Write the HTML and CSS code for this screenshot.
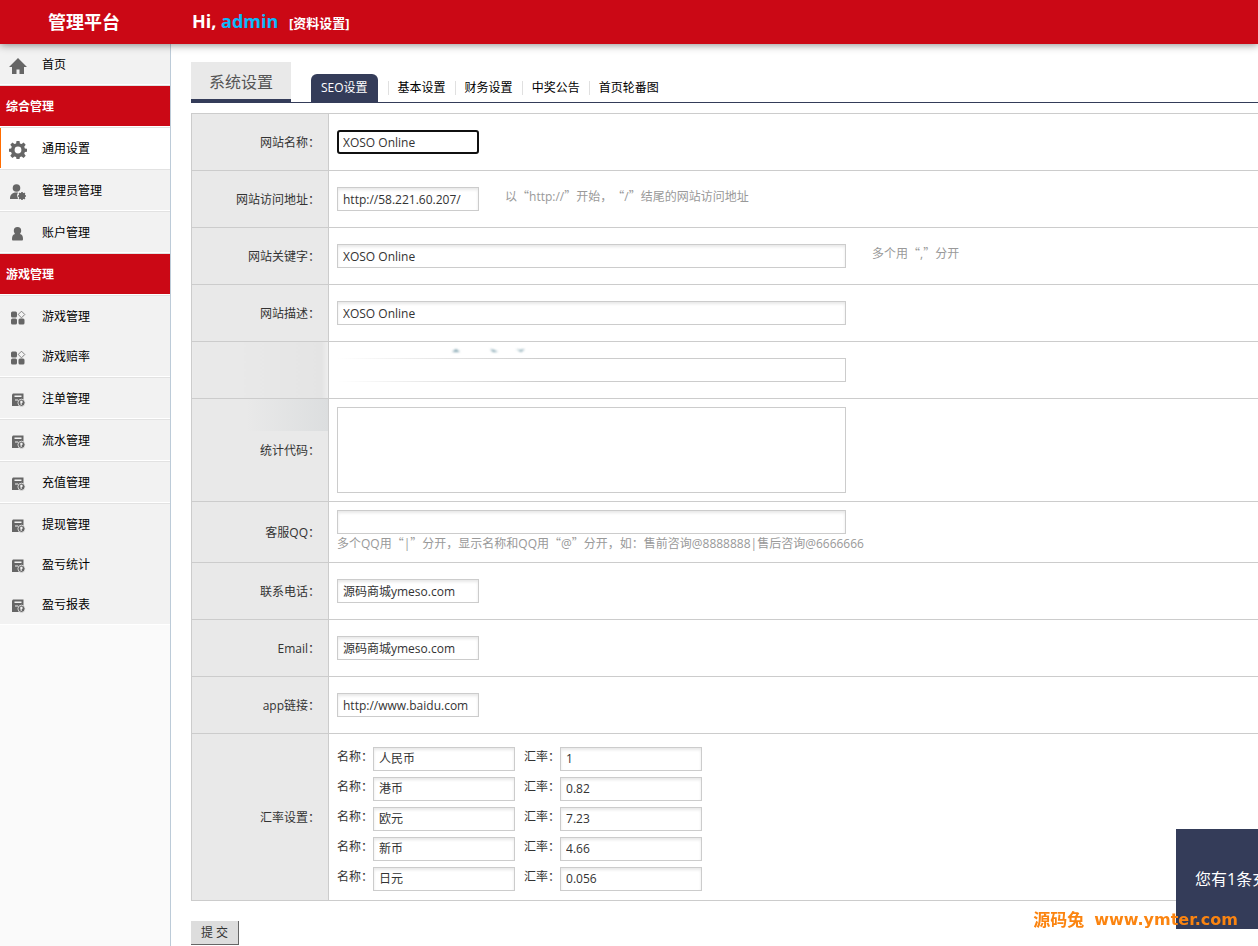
FILE: index.html
```html
<!DOCTYPE html>
<html lang="zh-CN">
<head>
<meta charset="utf-8">
<title>管理平台</title>
<link rel="stylesheet" href="styles.css">
</head>
<body>
<svg class="sprite" aria-hidden="true">
  <symbol id="i-home" viewBox="0 0 18 18"><path d="M9 1 0 10h3v7h4.500v-4.500h3V17H15v-7h3z"/></symbol>
  <symbol id="i-gear" viewBox="0 0 18 18"><path fill-rule="evenodd" d="M7.500 0h3l.4 2.400 1.700.7 2-1.500 2.100 2.100-1.500 2 .7 1.700 2.100.3v3l-2.100.4-.7 1.700 1.500 2-2.100 2.100-2-1.500-1.700.7-.4 2H7.500l-.4-2-1.700-.7-2 1.500-2.100-2.100 1.500-2-.7-1.700L0 10.700v-3l2.100-.3.7-1.700-1.500-2 2.100-2.100 2 1.500 1.700-.7zM9 5.600a3.400 3.400 0 1 0 0 6.800 3.400 3.400 0 0 0 0-6.800z"/></symbol>
  <symbol id="i-admin" viewBox="0 0 18 18"><circle cx="7.500" cy="5" r="3.800"/><path d="M1 16c0-4 2-6 5-6.500h3L8 12l1 4z"/><circle cx="13" cy="13" r="3.200"/><path d="M12.200 9h1.600v8h-1.600zM9 12.200h8v1.600H9zM9.600 10.700l1.100-1.100 5.700 5.700-1.100 1.100zM15.300 9.600l1.100 1.100-5.700 5.700-1.100-1.100z"/></symbol>
  <symbol id="i-user" viewBox="0 0 18 18"><path d="M8.500 2a3.700 3.700 0 0 1 3.700 3.700c0 1.500-.7 2.400-1.200 3.300 2 .4 3 2 3 5 0 1-.4 1.500-1.200 1.500H4.200C3.400 15.500 3 15 3 14c0-3 1-4.600 3-5-.5-.9-1.200-1.800-1.200-3.300A3.700 3.700 0 0 1 8.500 2z"/></symbol>
  <symbol id="i-apps" viewBox="0 0 18 18"><rect x="2" y="2.500" width="6" height="6" rx="1.500"/><rect x="2" y="9.500" width="6" height="6" rx="1.500"/><rect x="9.500" y="9.500" width="6" height="6" rx="1.500"/><path fill="none" stroke="#666" stroke-width=".8" d="m12.500 2.200 3.300 3.300-3.300 3.300-3.300-3.300z"/></symbol>
  <symbol id="i-doc" viewBox="0 0 18 18"><path d="M4 2.500h10.500V11L12 15H3V3.500z"/><path fill="#f2f2f2" d="M5.500 4.500h7V6h-7zM6 8.500h3v1H6z"/><circle cx="12.500" cy="11.800" r="3.600" stroke="#f2f2f2" stroke-width=".8"/><path fill="#f2f2f2" d="M11.300 9.800h2.200v2.200h-.8v2h-1v-1.500h-.4z"/></symbol>
</svg>

<header class="topbar">
  <h1 class="brand">管理平台</h1>
  <p class="greeting">Hi, <span class="greeting-name">admin</span> <a class="greeting-link" href="#">[资料设置]</a></p>
</header>

<div class="layout">
  <nav class="sidebar" aria-label="主菜单">
    <div class="group"><a class="item" href="#"><svg class="icon"><use href="#i-home"/></svg>首页</a></div>
    <h2 class="section">综合管理</h2>
    <div class="group"><a class="item item-active" href="#"><svg class="icon"><use href="#i-gear"/></svg>通用设置</a></div>
    <div class="group"><a class="item" href="#"><svg class="icon"><use href="#i-admin"/></svg>管理员管理</a></div>
    <div class="group"><a class="item" href="#"><svg class="icon"><use href="#i-user"/></svg>账户管理</a></div>
    <h2 class="section">游戏管理</h2>
    <div class="group">
      <a class="item" href="#"><svg class="icon"><use href="#i-apps"/></svg>游戏管理</a>
      <a class="item" href="#"><svg class="icon"><use href="#i-apps"/></svg>游戏赔率</a>
    </div>
    <div class="group"><a class="item" href="#"><svg class="icon"><use href="#i-doc"/></svg>注单管理</a></div>
    <div class="group"><a class="item" href="#"><svg class="icon"><use href="#i-doc"/></svg>流水管理</a></div>
    <div class="group"><a class="item" href="#"><svg class="icon"><use href="#i-doc"/></svg>充值管理</a></div>
    <div class="group">
      <a class="item" href="#"><svg class="icon"><use href="#i-doc"/></svg>提现管理</a>
      <a class="item" href="#"><svg class="icon"><use href="#i-doc"/></svg>盈亏统计</a>
      <a class="item" href="#"><svg class="icon"><use href="#i-doc"/></svg>盈亏报表</a>
    </div>
  </nav>

  <main class="main">
    <div class="tabbar">
      <h2 class="page-title">系统设置</h2>
      <nav class="tabs" aria-label="设置分类">
        <a class="tab tab-active" href="#">SEO设置</a>
        <a class="tab" href="#">基本设置</a>
        <a class="tab" href="#">财务设置</a>
        <a class="tab" href="#">中奖公告</a>
        <a class="tab" href="#">首页轮番图</a>
      </nav>
    </div>

    <form>
      <table class="settings">
        <tr>
          <th scope="row"><label for="name">网站名称：</label></th>
          <td><div class="field"><input class="text text-current" id="name" type="text" value="XOSO Online"></div></td>
        </tr>
        <tr>
          <th scope="row"><label for="url">网站访问地址：</label></th>
          <td><div class="field"><input class="text" id="url" type="text" value="http://58.221.60.207/"><span class="hint hint-side">以<span class="cjk">“</span>http://<span class="cjk">”</span>开始，<span class="cjk">“</span>/<span class="cjk">”</span>结尾的网站访问地址</span></div></td>
        </tr>
        <tr>
          <th scope="row"><label for="keys">网站关键字：</label></th>
          <td><div class="field"><input class="text text-wide" id="keys" type="text" value="XOSO Online"><span class="hint hint-side">多个用<span class="cjk">“</span>,<span class="cjk">”</span>分开</span></div></td>
        </tr>
        <tr>
          <th scope="row"><label for="desc">网站描述：</label></th>
          <td><div class="field"><input class="text text-wide" id="desc" type="text" value="XOSO Online"></div></td>
        </tr>
        <tr>
          <th scope="row" class="smudge-top"></th>
          <td class="marked"><div class="field"><input class="text text-wide text-faded" type="text" aria-label="其他"></div>
            <svg class="specks" viewBox="0 0 74 8" aria-hidden="true"><path fill="#7da0ac" d="m0 5 4-3 4 3zM38 2l4 1 4 2h-5zM64 2l4 1 5-1-4 3z"/></svg></td>
        </tr>
        <tr>
          <th scope="row" class="smudge-bottom"><label for="stats">统计代码：</label></th>
          <td class="tight"><textarea class="area" id="stats"></textarea></td>
        </tr>
        <tr>
          <th scope="row"><label for="qq">客服QQ：</label></th>
          <td class="tight"><div class="field"><input class="text text-wide" id="qq" type="text"></div>
            <div class="hint">多个QQ用<span class="cjk">“</span>|<span class="cjk">”</span>分开，显示名称和QQ用<span class="cjk">“</span>@<span class="cjk">”</span>分开，如：售前咨询@8888888|售后咨询@6666666</div></td>
        </tr>
        <tr>
          <th scope="row"><label for="tel">联系电话：</label></th>
          <td><div class="field"><input class="text" id="tel" type="text" value="源码商城ymeso.com"></div></td>
        </tr>
        <tr>
          <th scope="row"><label for="email">Email：</label></th>
          <td><div class="field"><input class="text" id="email" type="text" value="源码商城ymeso.com"></div></td>
        </tr>
        <tr>
          <th scope="row"><label for="app">app链接：</label></th>
          <td><div class="field"><input class="text" id="app" type="text" value="http://www.baidu.com"></div></td>
        </tr>
        <tr>
          <th scope="row">汇率设置：</th>
          <td class="tight">
            <div class="rate"><label for="n1">名称：</label><input class="text" id="n1" type="text" value="人民币"><label for="r1">汇率：</label><input class="text" id="r1" type="text" value="1"></div>
            <div class="rate"><label for="n2">名称：</label><input class="text" id="n2" type="text" value="港币"><label for="r2">汇率：</label><input class="text" id="r2" type="text" value="0.82"></div>
            <div class="rate"><label for="n3">名称：</label><input class="text" id="n3" type="text" value="欧元"><label for="r3">汇率：</label><input class="text" id="r3" type="text" value="7.23"></div>
            <div class="rate"><label for="n4">名称：</label><input class="text" id="n4" type="text" value="新币"><label for="r4">汇率：</label><input class="text" id="r4" type="text" value="4.66"></div>
            <div class="rate"><label for="n5">名称：</label><input class="text" id="n5" type="text" value="日元"><label for="r5">汇率：</label><input class="text" id="r5" type="text" value="0.056"></div>
          </td>
        </tr>
      </table>
      <button class="submit" type="button">提 交</button>
    </form>
  </main>
</div>

<aside class="toast">您有1条充</aside>
<div class="watermark"><span class="watermark-name">源码兔</span><span>www.ymter.com</span></div>
</body>
</html>
```

FILE: styles.css
```css
* { box-sizing: border-box; }

body {
  margin: 0;
  min-height: 100vh;
  display: flex;
  flex-direction: column;
  background: #fff;
  color: #333;
  font: 12px/20px "Open Sans", "Noto Sans CJK SC", sans-serif;
  text-spacing-trim: space-all;
}

a { color: inherit; text-decoration: none; }
h1, h2, p { margin: 0; }
.sprite { position: absolute; width: 0; height: 0; }
.cjk { font-family: "Noto Sans CJK SC", sans-serif; line-height: 1; }

/* Header */
.topbar {
  position: relative;
  z-index: 1;
  display: flex;
  align-items: center;
  height: 44px;
  background: #cb0815;
  color: #fff;
  box-shadow: 0 1px 8px rgba(0, 0, 0, .45);
}
.brand { width: 168px; margin-right: 24px; text-align: center; font-size: 18px; }
.greeting { font-size: 18px; font-weight: 700; }
.greeting-name { color: #0cb8fb; }
.greeting-link { margin-left: 6px; font-size: 13px; }

.layout { display: flex; flex: 1; }

/* Sidebar */
.sidebar {
  flex: 0 0 171px;
  border-right: 1px solid #bccbd8;
  background: #fafafa;
  color: #000;
}
.group { border-top: 1px solid #e2e2e2; border-bottom: 1px solid #fff; }
.group:first-child { border-top: 0; }
.item {
  display: flex;
  align-items: center;
  gap: 15px;
  height: 40px;
  padding: 2px 0 0 9px;
  background: #f2f2f2;
}
.item-active { padding-left: 8px; border-left: 1px solid #ff6c00; background: #fff; }
.icon { width: 18px; height: 18px; margin-top: 2px; fill: #666; }
.section {
  height: 42px;
  padding: 1px 6px 0;
  border-top: 1px solid #e2e2e2;
  border-bottom: 1px solid #fff;
  background: #cb0815 padding-box;
  color: #fff;
  font-size: 12px;
  line-height: 40px;
}

/* Tabs */
.main { flex: 1; min-width: 0; padding: 18px 0 0 20px; }
.tabbar {
  display: flex;
  align-items: flex-end;
  gap: 20px;
  height: 41px;
  margin-bottom: 10px;
  border-bottom: 1px solid #343c59;
}
.page-title {
  width: 100px;
  height: 40px;
  border-bottom: 3px solid #343c59;
  background: #e9e9e9;
  color: #555;
  font-size: 16px;
  font-weight: 400;
  line-height: 40px;
  text-align: center;
}
.tabs { display: flex; height: 28px; color: #000; line-height: 30px; white-space: nowrap; }
.tab { display: flex; align-items: center; }
.tab::before { content: ""; width: 1px; height: 14px; margin: 0 9px; background: #e0e0e0; }
.tab-active { margin-right: 1px; padding: 0 10px; border-radius: 6px 6px 0 0; background: #343c59; color: #fff; }
.tab-active::before { display: none; }

/* Settings table */
.settings { width: 100%; border-collapse: collapse; }
.settings th, .settings td { border: 1px solid #ccc; border-right: 0; }
.settings th {
  width: 137px;
  padding: 2px 8px 0 0;
  background: #e9e9e9;
  font-weight: 400;
  text-align: right;
}
.settings td { padding: 16px 8px; }
.settings .tight { padding: 8px; }
.settings .smudge-top { background: linear-gradient(90deg, #e9e9e9 30%, #e4e4e4 95%, #eee); }
.settings .smudge-bottom {
  background: #e9e9e9 linear-gradient(90deg, #e9e9e9 40%, #dcdedf) no-repeat 0 0 / 100% 32px;
}

.field { display: flex; align-items: flex-start; }
.text {
  width: 142px;
  height: 24px;
  padding: 0 5px;
  border: 1px solid #ccc;
  border-radius: 0;
  background: #fff;
  box-shadow: inset 0 2px 3px #e8e8e8;
  color: #333;
  font: inherit;
}
.text-wide { width: 509px; }
.text-current { padding: 0 4px; border: 2px solid #101010; border-radius: 3px; box-shadow: none; outline: 0; }
.text-faded { border-image: linear-gradient(90deg, #fff, #ccc 40%) 1; box-shadow: none; }
.area {
  display: block;
  width: 509px;
  height: 86px;
  border: 1px solid #ccc;
  resize: none;
  font: inherit;
}
.hint { height: 20px; color: #999; white-space: nowrap; }
.hint-side { margin-left: 26px; }

.marked { position: relative; }
.specks { position: absolute; left: 123px; top: 5px; width: 74px; height: 8px; filter: blur(1px); }

.rate { display: flex; align-items: flex-end; height: 30px; line-height: 30px; }
.rate .text { margin-bottom: 1px; margin-right: 9px; }

.submit {
  display: block;
  width: 48px;
  height: 24px;
  margin-top: 20px;
  padding: 0;
  border: solid #666;
  border-width: 0 1px 1px 0;
  background: #ddd;
  color: #333;
  font: inherit;
}

/* Floating notice and site mark */
.toast {
  position: fixed;
  right: 0;
  bottom: 17px;
  width: 82px;
  padding-left: 19px;
  overflow: hidden;
  background: #343c59;
  color: #fff;
  font-size: 16px;
  line-height: 100px;
  white-space: nowrap;
}
.watermark {
  position: fixed;
  right: 20px;
  bottom: 16px;
  display: flex;
  gap: 10px;
  color: #fb8410;
  font: 700 16px/20px "DejaVu Sans", "Noto Sans CJK SC", sans-serif;
}
.watermark-name { font-size: 17px; }
```
